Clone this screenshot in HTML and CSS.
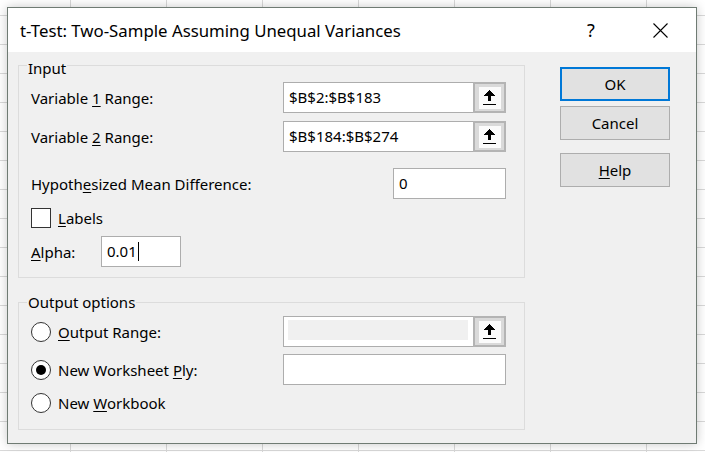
FILE: index.html
```html
<!DOCTYPE html>
<html>
<head>
<meta charset="utf-8">
<link rel="stylesheet" href="styles.css">
</head>
<body>
<div class="dialog">
  <div class="titlebar">
    <span class="title">t-Test: Two-Sample Assuming Unequal Variances</span>
    <span class="tb-btn tb-help">?</span>
    <span class="tb-btn tb-close"><svg width="15" height="15" viewBox="0 0 15 15"><path d="M0.5 0.5 L14.5 14.5 M14.5 0.5 L0.5 14.5" stroke="#000" stroke-width="1.1" fill="none"/></svg></span>
  </div>
  <div class="body">
    <div class="left">
      <div class="group group-input">
        <div class="group-title gt-input">Input</div>
        <div class="row row-1">
          <span class="label">Variable <u>1</u> Range:</span>
          <div class="refedit">
            <div class="field field-ref">$B$2:$B$183</div>
            <div class="pick"><svg width="22" height="22" viewBox="0 0 22 22" shape-rendering="crispEdges"><rect width="22" height="22" fill="#fbfbfb"/><path d="M10 3 H11 V4 H12 V5 H13 V6 H14 V7 H15 V8 H16 V9 H12 V14 H9 V9 H5 V8 H6 V7 H7 V6 H8 V5 H9 V4 H10 Z" fill="#000"/><rect x="4" y="17" width="13" height="1" fill="#000"/></svg></div>
          </div>
        </div>
        <div class="row row-2">
          <span class="label">Variable <u>2</u> Range:</span>
          <div class="refedit">
            <div class="field field-ref">$B$184:$B$274</div>
            <div class="pick"><svg width="22" height="22" viewBox="0 0 22 22" shape-rendering="crispEdges"><rect width="22" height="22" fill="#fbfbfb"/><path d="M10 3 H11 V4 H12 V5 H13 V6 H14 V7 H15 V8 H16 V9 H12 V14 H9 V9 H5 V8 H6 V7 H7 V6 H8 V5 H9 V4 H10 Z" fill="#000"/><rect x="4" y="17" width="13" height="1" fill="#000"/></svg></div>
          </div>
        </div>
        <div class="row row-3">
          <span class="label">Hypoth<u>e</u>sized Mean Difference:</span>
          <div class="field field-diff">0</div>
        </div>
        <div class="row row-4">
          <span class="check"></span>
          <span class="label label-after"><u>L</u>abels</span>
        </div>
        <div class="row row-5">
          <span class="label label-alpha"><u>A</u>lpha:</span>
          <div class="field field-alpha">0.01<span class="caret"></span></div>
        </div>
      </div>
      <div class="group group-output">
        <div class="group-title gt-output">Output options</div>
        <div class="row orow-1">
          <span class="radio"></span>
          <span class="label label-after"><u>O</u>utput Range:</span>
          <div class="refedit">
            <div class="field field-ref field-disabled"><div class="disabled-fill"></div></div>
            <div class="pick"><svg width="22" height="22" viewBox="0 0 22 22" shape-rendering="crispEdges"><rect width="22" height="22" fill="#fbfbfb"/><path d="M10 3 H11 V4 H12 V5 H13 V6 H14 V7 H15 V8 H16 V9 H12 V14 H9 V9 H5 V8 H6 V7 H7 V6 H8 V5 H9 V4 H10 Z" fill="#000"/><rect x="4" y="17" width="13" height="1" fill="#000"/></svg></div>
          </div>
        </div>
        <div class="row orow-2">
          <span class="radio radio-on"></span>
          <span class="label label-after">New Worksheet <u>P</u>ly:</span>
          <div class="field field-wide"></div>
        </div>
        <div class="row orow-3">
          <span class="radio"></span>
          <span class="label label-after">New <u>W</u>orkbook</span>
        </div>
      </div>
    </div>
    <div class="buttons">
      <div class="btn btn-default">OK</div>
      <div class="btn btn-cancel">Cancel</div>
      <div class="btn btn-help"><u>H</u>elp</div>
    </div>
  </div>
</div>
</body>
</html>
```

FILE: styles.css
```css
html, body {
  margin: 0;
  padding: 0;
}
body {
  width: 705px;
  height: 452px;
  overflow: hidden;
  background-color: #ffffff;
  background-image:
    linear-gradient(to right, #d9d9d9 1px, transparent 1px),
    linear-gradient(to bottom, #d9d9d9 1px, transparent 1px);
  background-size: 96px 100%, 100% 29px;
  background-position: 70px 0, 0 15px;
  font-family: "Noto Sans", "Open Sans", sans-serif;
  font-size: 15px;
  color: #000;
  padding-top: 7px;
  padding-left: 7px;
  box-sizing: border-box;
}
u {
  text-decoration-thickness: 1px;
  text-underline-offset: 2px;
}
.dialog {
  width: 690px;
  height: 437px;
  box-sizing: border-box;
  border: 1px solid #6f7b73;
  background: #f0f0f0;
  box-shadow: 0 0 10px rgba(0, 0, 0, 0.22);
  display: flex;
  flex-direction: column;
}
.titlebar {
  height: 44px;
  background: #ffffff;
  display: flex;
  align-items: center;
  padding: 0 13px 0 12px;
  flex: none;
}
.title {
  flex: 1;
  font-size: 16.8px;
}
.tb-btn {
  width: 46px;
  display: flex;
  justify-content: center;
  align-items: center;
}
.tb-help {
  font-size: 18px;
  margin-right: 23px;
}
.tb-close svg {
  display: block;
}
.body {
  display: flex;
  padding: 13px 0 0 10px;
}
.left {
  width: 507px;
  flex: none;
}
.group {
  border: 1px solid #dcdcdc;
  padding: 0 18px 10px 12px;
}
.group-output {
  margin-top: 24px;
  padding-bottom: 11px;
}
.group-title {
  width: fit-content;
  height: 20px;
  line-height: 20px;
  background: #f0f0f0;
  padding: 0 1px;
  margin-left: -4px;
}
.gt-input {
  margin-top: -8px;
}
.gt-output {
  margin-top: -11px;
}
.row {
  display: flex;
  align-items: center;
  height: 31px;
}
.row-1 { margin-top: 4px; }
.row-2 { margin-top: 8px; }
.row-3 { margin-top: 16px; }
.row-4 { margin-top: 9px; height: 20px; }
.row-5 { margin-top: 8px; }
.orow-1 { margin-top: 4px; }
.orow-2 { margin-top: 7px; }
.orow-3 { margin-top: 2px; }
.label {
  white-space: nowrap;
}
.label-after {
  margin-left: 7px;
}
.label-alpha {
  width: 70px;
}
.refedit {
  margin-left: auto;
  display: flex;
  height: 31px;
}
.field {
  height: 31px;
  box-sizing: border-box;
  border: 1px solid #adadad;
  background: #ffffff;
  padding-left: 5px;
  line-height: 29px;
  white-space: nowrap;
}
.field-ref {
  width: 190px;
  border-right: none;
}
.field-diff {
  margin-left: auto;
  width: 113px;
}
.field-alpha {
  width: 80px;
  display: flex;
  align-items: center;
}
.caret {
  display: inline-block;
  width: 1px;
  height: 19px;
  background: #000;
  margin-left: 1px;
}
.field-wide {
  margin-left: auto;
  width: 223px;
}
.field-disabled {
  padding: 3px 5px 6px 4px;
}
.disabled-fill {
  height: 100%;
  background: #f0f0f0;
}
.pick {
  width: 33px;
  height: 31px;
  box-sizing: border-box;
  border: 2px solid #b4b4b4;
  background: #dadada;
  display: flex;
  align-items: center;
  justify-content: center;
}
.pick svg {
  display: block;
}
.check {
  width: 20px;
  height: 20px;
  box-sizing: border-box;
  border: 1px solid #333333;
  background: #ffffff;
  flex: none;
}
.radio {
  width: 20px;
  height: 20px;
  box-sizing: border-box;
  border: 1px solid #333333;
  border-radius: 50%;
  background: #ffffff;
  flex: none;
  display: flex;
  align-items: center;
  justify-content: center;
}
.radio-on::after {
  content: "";
  width: 10px;
  height: 10px;
  border-radius: 50%;
  background: #000;
}
.buttons {
  width: 110px;
  margin-left: 35px;
  padding-top: 2px;
  display: flex;
  flex-direction: column;
}
.btn {
  height: 34px;
  box-sizing: border-box;
  border: 1px solid #adadad;
  background: #e1e1e1;
  display: flex;
  align-items: center;
  justify-content: center;
}
.btn-default {
  border: 2px solid #0078d7;
}
.btn-cancel {
  margin-top: 5px;
}
.btn-help {
  margin-top: 13px;
}
```
